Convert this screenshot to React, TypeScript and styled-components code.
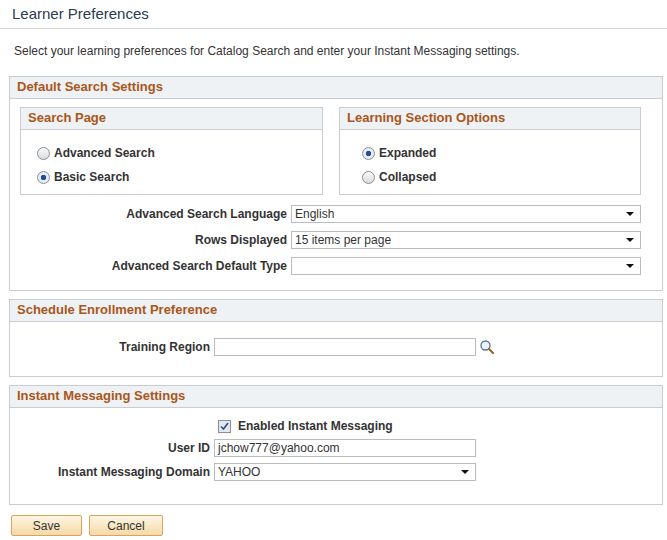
import React from 'react';
import styled, { createGlobalStyle } from 'styled-components';

const Global = createGlobalStyle`
  body { margin: 0; font-family: "Liberation Sans", Arial, sans-serif; font-size: 12px; color: #333; background: #fff; }
`;

const Page = styled.div`
  width: 667px;
  height: 540px;
  overflow: hidden;
`;

const Title = styled.h1`
  margin: 0;
  padding: 5px 0 0 12px;
  height: 23px;
  font-size: 15px;
  font-weight: normal;
  color: #2a3a4e;
  border-bottom: 1px solid #cfd3d8;
`;

const Intro = styled.p`
  margin: 15px 0 0 14px;
  font-size: 12px;
  color: #333;
`;

const Section = styled.section<{ $h: number; $mt: number }>`
  margin: ${p => p.$mt}px 4px 0 9px;
  height: ${p => p.$h}px;
  border: 1px solid #c9cdd2;
  box-sizing: border-box;
`;

const Header = styled.div`
  height: 21px;
  background: #eff2f4;
  border-bottom: 1px solid #c9cdd2;
  padding-left: 7px;
  font-size: 13px;
  font-weight: bold;
  color: #a9561b;
  line-height: 20px;
`;

const Groups = styled.div`
  display: grid;
  grid-template-columns: 303px 302px;
  gap: 16px;
  padding: 8px 0 0 10px;
`;

const Group = styled.div`
  height: 88px;
  border: 1px solid #c9cdd2;
  box-sizing: border-box;
`;

const Options = styled.div`
  display: flex;
  flex-direction: column;
  gap: 8px;
  padding: 15px 0 0 16px;
`;

const RadioRow = styled.label`
  display: flex;
  align-items: center;
  gap: 4px;
  font-weight: bold;
  height: 16px;
`;

const Radio = styled.span<{ $on?: boolean }>`
  width: 11px;
  height: 11px;
  border-radius: 50%;
  border: 1px solid #8a8f96;
  background: ${p => p.$on ? 'radial-gradient(circle, #1d4f9a 0 2.5px, #e8ecf0 3px)' : 'linear-gradient(#fafafa, #d8dadc)'};
`;

const Rows = styled.div<{ $label: number; $pt: number; $gap: number }>`
  display: grid;
  grid-template-columns: ${p => p.$label}px auto;
  column-gap: 4px;
  row-gap: ${p => p.$gap}px;
  padding-top: ${p => p.$pt}px;
  align-items: center;
`;

const Label = styled.span`
  text-align: right;
  font-weight: bold;
`;

const Field = styled.div<{ $w: number }>`
  width: ${p => p.$w}px;
  height: 18px;
  border: 1px solid #b9bcc0;
  box-sizing: border-box;
  display: flex;
  align-items: center;
  justify-content: space-between;
  padding: 0 6px 0 3px;
  font-size: 12px;
  background: #fff;
`;

const Arrow = styled.span`
  width: 0;
  height: 0;
  border-left: 4px solid transparent;
  border-right: 4px solid transparent;
  border-top: 4px solid #111;
`;

const Inline = styled.div`
  display: flex;
  align-items: center;
  gap: 3px;
`;

const Check = styled.span`
  width: 11px;
  height: 11px;
  border: 1px solid #8a8f96;
  background: #e4e8ee;
  display: inline-flex;
  align-items: center;
  justify-content: center;
  margin-right: 4px;
`;

const Buttons = styled.div`
  display: flex;
  gap: 7px;
  margin: 10px 0 0 11px;
`;

const Button = styled.button<{ $w: number }>`
  width: ${p => p.$w}px;
  height: 21px;
  border: 1px solid #d9a35b;
  border-radius: 2px;
  background: linear-gradient(#fff6e4, #f5d9a6);
  font-family: "Liberation Sans", Arial, sans-serif;
  font-size: 12px;
  color: #333;
  padding: 0;
`;

const Select = ({ w, value }: { w: number; value: string }) => (
  <Field $w={w}><span>{value}</span><Arrow /></Field>
);

export default function App() {
  return (
    <Page>
      <Global />
      <Title>Learner Preferences</Title>
      <Intro>Select your learning preferences for Catalog Search and enter your Instant Messaging settings.</Intro>
      <Section $h={215} $mt={18}>
        <Header>Default Search Settings</Header>
        <Groups>
          <Group>
            <Header>Search Page</Header>
            <Options>
              <RadioRow><Radio />Advanced Search</RadioRow>
              <RadioRow><Radio $on />Basic Search</RadioRow>
            </Options>
          </Group>
          <Group>
            <Header>Learning Section Options</Header>
            <Options style={{ paddingLeft: 22 }}>
              <RadioRow><Radio $on />Expanded</RadioRow>
              <RadioRow><Radio />Collapsed</RadioRow>
            </Options>
          </Group>
        </Groups>
        <Rows $label={277} $pt={10} $gap={8}>
          <Label>Advanced Search Language</Label>
          <Select w={350} value="English" />
          <Label>Rows Displayed</Label>
          <Select w={350} value="15 items per page" />
          <Label>Advanced Search Default Type</Label>
          <Select w={350} value="" />
        </Rows>
      </Section>
      <Section $h={78} $mt={8}>
        <Header>Schedule Enrollment Preference</Header>
        <Rows $label={200} $pt={16} $gap={0}>
          <Label>Training Region</Label>
          <Inline>
            <Field $w={262} />
            <svg width="16" height="16" viewBox="0 0 16 16">
              <circle cx="6.5" cy="6.5" r="4.5" fill="#eaf3fb" stroke="#5a7390" strokeWidth="1.3" />
              <line x1="10" y1="10" x2="14" y2="14" stroke="#8a6a2a" strokeWidth="2.2" strokeLinecap="round" />
            </svg>
          </Inline>
        </Rows>
      </Section>
      <Section $h={120} $mt={8}>
        <Header>Instant Messaging Settings</Header>
        <Rows $label={200} $pt={11} $gap={6}>
          <span />
          <Inline style={{ marginLeft: 4 }}>
            <Check>
              <svg width="9" height="9" viewBox="0 0 9 9"><path d="M1 4.5 L3.5 7 L8 1" fill="none" stroke="#2d4f8a" strokeWidth="1.6" /></svg>
            </Check>
            <Label>Enabled Instant Messaging</Label>
          </Inline>
          <Label>User ID</Label>
          <Field $w={262}>jchow777@yahoo.com</Field>
          <Label>Instant Messaging Domain</Label>
          <Select w={262} value="YAHOO" />
        </Rows>
      </Section>
      <Buttons>
        <Button $w={71}>Save</Button>
        <Button $w={74}>Cancel</Button>
      </Buttons>
    </Page>
  );
}
